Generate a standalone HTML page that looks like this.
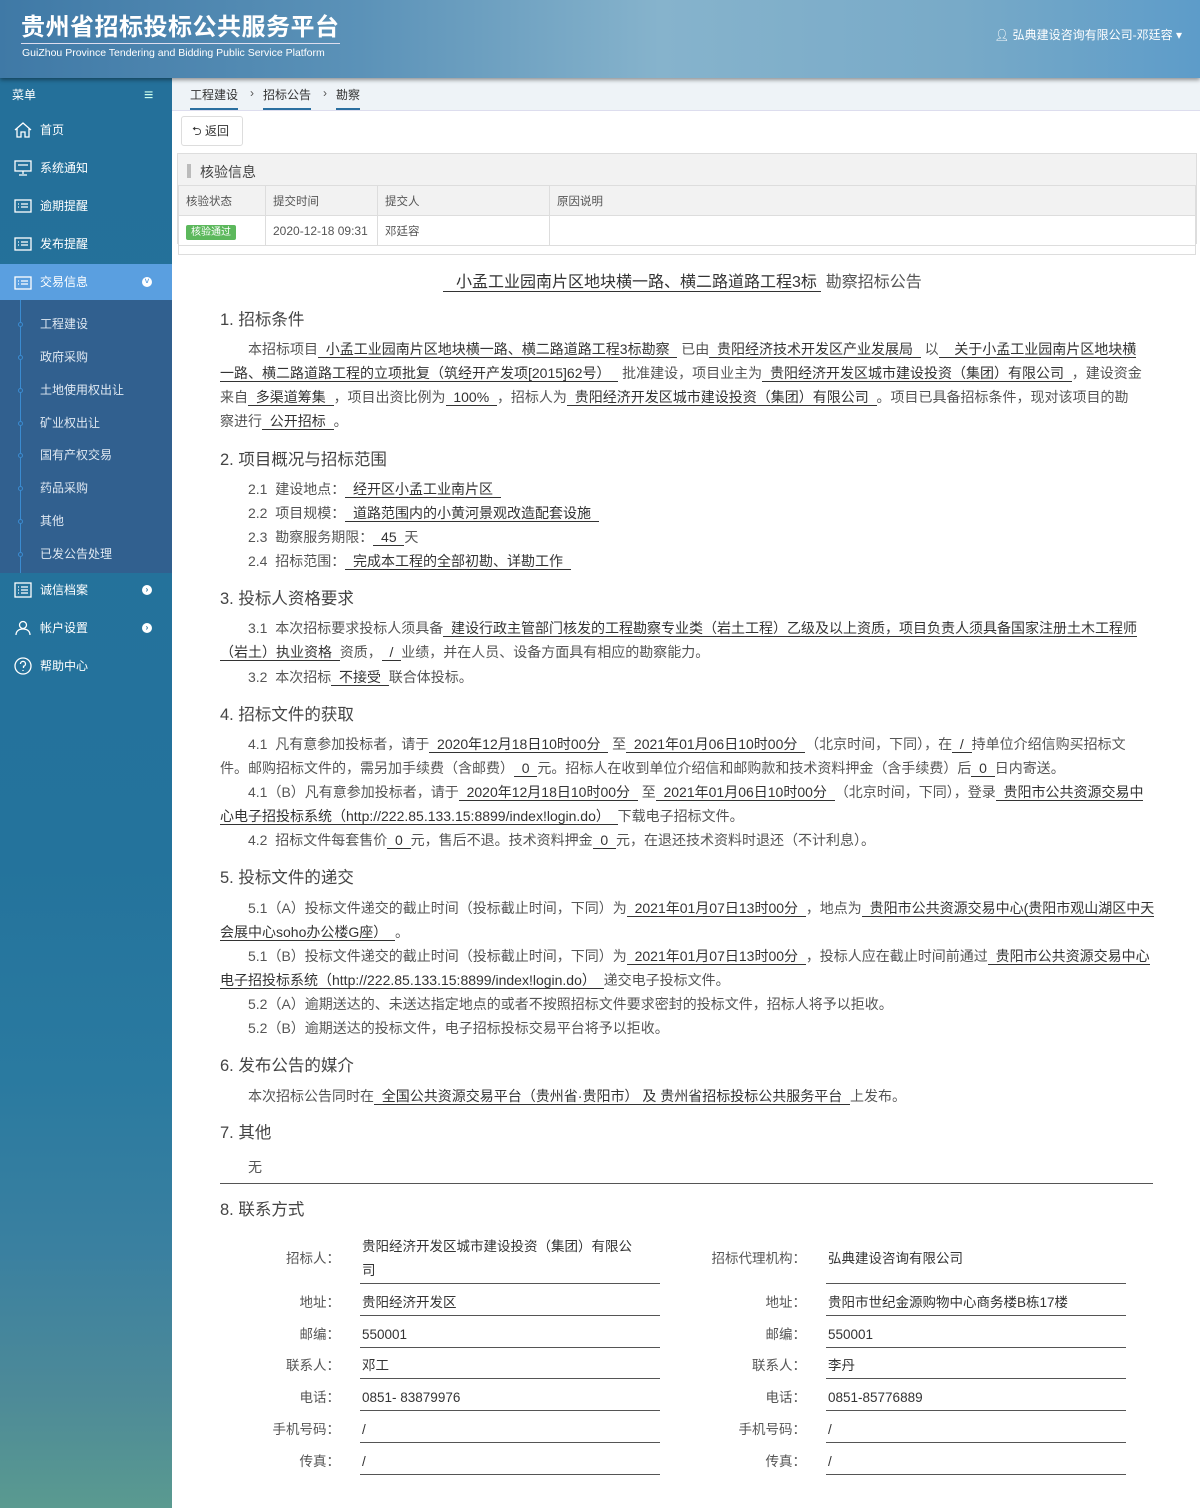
<!DOCTYPE html>
<html><head><meta charset="utf-8">
<style>
*{margin:0;padding:0;box-sizing:border-box}
body{width:1200px;height:1508px;position:relative;overflow:hidden;background:#fff;font-family:"Liberation Sans","Noto Sans CJK SC",sans-serif}
#hd{position:absolute;left:0;top:0;width:1200px;height:78px;background:linear-gradient(90deg,#3f79a6 0%,#5b92b8 30%,#86b3cc 55%,#78aac8 80%,#5d9cc9 100%);box-shadow:0 2px 4px rgba(0,0,0,.4);z-index:3}
#hd .t{position:absolute;left:21px;top:14px;color:#fff;font-size:24px;font-weight:bold;letter-spacing:0.5px;border-bottom:1px solid #dde;padding-bottom:1px;line-height:28px}
#hd .e{position:absolute;left:22px;top:47px;color:#fff;font-size:10.5px}
#hd .u{position:absolute;right:18px;top:26px;color:#fff;font-size:12px}
#sb{position:absolute;left:0;top:78px;width:172px;height:1430px;background:linear-gradient(180deg,#24709a 0%,#24739c 55%,#2a7aa0 70%,#3a80a0 82%,#4d8a98 92%,#5a9a90 100%)}
.mi{position:absolute;left:0;width:172px;height:38px;color:#fff;font-size:12px;line-height:38px;padding-left:40px}
.mi svg{position:absolute;left:14px;top:11px}
.mi .ar{position:absolute;left:142px;top:14px;width:10px;height:10px;border-radius:50%;background:#fff;color:#24709a;font-size:8px;line-height:10px;text-align:center;font-weight:bold}
.sub{position:absolute;left:0;top:300px;width:172px;height:273px;background:#31608f}
.sub .ln{position:absolute;left:20px;top:0;width:1px;height:273px;background:#3b8bd0}
.si{position:absolute;left:40px;color:#dfe8f2;font-size:12px}
.si:before{content:"";position:absolute;left:-22px;top:7px;width:3px;height:3px;border:1px solid #3b8bd0;border-radius:50%;background:#31608f}
#bc{position:absolute;left:172px;top:78px;width:1028px;height:33px;background:#eef3f7;border-bottom:1px solid #dde}
#bc span{position:absolute;top:8px;font-size:12px;color:#333;border-bottom:2px solid #2a6fa0;padding-bottom:5px}
#bc i{position:absolute;top:8px;font-style:normal;font-size:12px;color:#555}
.btn{position:absolute;left:181px;top:116px;width:62px;height:30px;border:1px solid #ddd;border-radius:3px;background:#fff;font-size:12px;line-height:28px;padding-left:10px;color:#333}
.pn{position:absolute;left:177px;top:153px;width:1020px;height:91px;border:1px solid #ddd;background:#f2f2f2}
.pn .h{position:absolute;left:22px;top:8px;font-size:14px;color:#444}
.pn .bar{position:absolute;left:9px;top:10px;width:4px;height:14px;background:#bbb}
.pn table{position:absolute;left:0;top:31px;width:1018px;border-collapse:collapse;font-size:11.5px;color:#555}
.pn td{border:1px solid #ddd;height:30px;padding-left:7px}
.pn tr.r td{background:#fff}
.tag{background:#5cb85c;color:#fff;font-size:10px;padding:2px 5px;border-radius:2px}
.doc{position:absolute;left:0;top:2px;width:1200px;height:1500px;font-family:"Liberation Sans","Noto Sans CJK SC",sans-serif;color:#555;font-size:14px}
.l{position:absolute;white-space:nowrap;height:24px;line-height:24px}
.l u{text-decoration:none;border-bottom:1px solid #333;color:#333}
.hh{position:absolute;left:220px;font-size:16.5px;color:#444;font-family:"Liberation Sans","Noto Sans CJK SC",sans-serif;line-height:24px}
.lab{position:absolute;text-align:right;font-size:13.5px;color:#555;line-height:24px}
.val{position:absolute;border-bottom:1px solid #555;font-size:13.5px;color:#333;line-height:24px;padding-left:2px}
</style></head><body>
<div id="hd">
<div class="t">贵州省招标投标公共服务平台</div>
<div class="e">GuiZhou Province Tendering and Bidding Public Service Platform</div>
<div class="u">&#128100;&#xFE0E; 弘典建设咨询有限公司-邓廷容 ▾</div>
</div>
<div id="sb">
<div class="mi" style="top:0;height:35px;line-height:35px;padding-left:12px;font-size:12px">菜单<span style="position:absolute;left:144px;top:0;font-size:16px;color:#cfe">≡</span></div>
<div class="mi" style="top:33px"><svg width="18" height="16" viewBox="0 0 18 16" fill="none" stroke="#fff" stroke-width="1.3"><path d="M1 8L9 1l8 7M3 6v9h4v-5h4v5h4V6"/></svg>首页</div>
<div class="mi" style="top:71px"><svg width="18" height="16" viewBox="0 0 18 16" fill="none" stroke="#fff" stroke-width="1.3"><rect x="1" y="1" width="16" height="10"/><path d="M9 11v3M5 15h8M4 5h10"/></svg>系统通知</div>
<div class="mi" style="top:109px"><svg width="18" height="16" viewBox="0 0 18 16" fill="none" stroke="#fff" stroke-width="1.3"><rect x="1" y="2" width="16" height="12"/><path d="M4 6h1M4 9h1M7 6h7M7 9h7"/></svg>逾期提醒</div>
<div class="mi" style="top:147px"><svg width="18" height="16" viewBox="0 0 18 16" fill="none" stroke="#fff" stroke-width="1.3"><rect x="1" y="2" width="16" height="12"/><path d="M4 6h1M4 9h1M7 6h7M7 9h7"/></svg>发布提醒</div>
<div class="mi" style="top:186px;height:36px;line-height:36px;background:#5a9fe0"><svg width="18" height="16" viewBox="0 0 18 16" fill="none" stroke="#fff" stroke-width="1.3"><rect x="1" y="2" width="16" height="12"/><path d="M4 6h1M4 9h1M7 6h7M7 9h7"/></svg>交易信息<span class="ar" style="top:13px;color:#5a9fe0">˅</span></div>
</div>
<div class="sub" style="top:300px"><div class="ln"></div>
<div class="si" style="top:15px">工程建设</div>
<div class="si" style="top:48px">政府采购</div>
<div class="si" style="top:81px">土地使用权出让</div>
<div class="si" style="top:114px">矿业权出让</div>
<div class="si" style="top:146px">国有产权交易</div>
<div class="si" style="top:179px">药品采购</div>
<div class="si" style="top:212px">其他</div>
<div class="si" style="top:245px">已发公告处理</div>
</div>
<div class="mi" style="top:571px"><svg width="18" height="16" viewBox="0 0 18 16" fill="none" stroke="#fff" stroke-width="1.3"><rect x="1" y="1" width="16" height="14"/><path d="M4 5h1M4 8h1M4 11h1M7 5h7M7 8h7M7 11h7"/></svg>诚信档案<span class="ar">›</span></div>
<div class="mi" style="top:609px"><svg width="18" height="16" viewBox="0 0 18 16" fill="none" stroke="#fff" stroke-width="1.3"><circle cx="9" cy="5" r="3.5"/><path d="M2 15c0-4 3-6 7-6s7 2 7 6"/></svg>帐户设置<span class="ar">›</span></div>
<div class="mi" style="top:647px"><svg width="18" height="18" viewBox="0 0 18 18" fill="none" stroke="#fff" stroke-width="1.3" style="top:10px"><circle cx="9" cy="9" r="8"/><path d="M6.5 7a2.5 2.5 0 1 1 3 2.3V11M9 13v1"/></svg>帮助中心</div>

<div id="bc"><span style="left:18px">工程建设</span><i style="left:78px">›</i><span style="left:91px">招标公告</span><i style="left:151px">›</i><span style="left:164px">勘察</span></div>
<div class="btn">⮌ 返回</div>
<div class="pn"><div class="bar"></div><div class="h">核验信息</div>
<table><tr><td style="width:87px">核验状态</td><td style="width:112px">提交时间</td><td style="width:172px">提交人</td><td>原因说明</td></tr>
<tr class="r"><td><span class="tag">核验通过</span></td><td style="font-size:12px">2020-12-18 09:31</td><td>邓廷容</td><td></td></tr>
<tr class="r"><td colspan="4" style="height:9px"></td></tr></table></div>

<div class="doc">
<div class="l" style="left:443px;top:269px;font-size:16px;color:#555"><u style="padding-left:13px">小孟工业园南片区地块横一路、横二路道路工程3标&nbsp;</u> 勘察招标公告</div>
<div class="hh" style="top:306px">1. 招标条件</div>
<div class="l" style="left:248px;top:335px">本招标项目<u>&nbsp;&nbsp;小孟工业园南片区地块横一路、横二路道路工程3标勘察&nbsp;&nbsp;</u> 已由<u>&nbsp;&nbsp;贵阳经济技术开发区产业发展局&nbsp;&nbsp;</u> 以<u>&nbsp;&nbsp;&nbsp;&nbsp;关于小孟工业园南片区地块横</u></div>
<div class="l" style="left:220px;top:359px"><u>一路、横二路道路工程的立项批复（筑经开产发项[2015]62号）&nbsp;&nbsp;</u> 批准建设，项目业主为<u>&nbsp;&nbsp;贵阳经济开发区城市建设投资（集团）有限公司&nbsp;&nbsp;</u>，建设资金</div>
<div class="l" style="left:220px;top:383px">来自<u>&nbsp;&nbsp;多渠道筹集&nbsp;&nbsp;</u>，项目出资比例为<u>&nbsp;&nbsp;100%&nbsp;&nbsp;</u>，招标人为<u>&nbsp;&nbsp;贵阳经济开发区城市建设投资（集团）有限公司&nbsp;&nbsp;</u>。项目已具备招标条件，现对该项目的勘</div>
<div class="l" style="left:220px;top:407px">察进行<u>&nbsp;&nbsp;公开招标&nbsp;&nbsp;</u>。</div>

<div class="hh" style="top:446px">2. 项目概况与招标范围</div>
<div class="l" style="left:248px;top:475px">2.1&nbsp; 建设地点：<u>&nbsp;&nbsp;经开区小孟工业南片区&nbsp;&nbsp;</u></div>
<div class="l" style="left:248px;top:499px">2.2&nbsp; 项目规模：<u>&nbsp;&nbsp;道路范围内的小黄河景观改造配套设施&nbsp;&nbsp;</u></div>
<div class="l" style="left:248px;top:523px">2.3&nbsp; 勘察服务期限：<u>&nbsp;&nbsp;45&nbsp;&nbsp;</u>天</div>
<div class="l" style="left:248px;top:547px">2.4&nbsp; 招标范围：<u>&nbsp;&nbsp;完成本工程的全部初勘、详勘工作&nbsp;&nbsp;</u></div>

<div class="hh" style="top:585px">3. 投标人资格要求</div>
<div class="l" style="left:248px;top:614px">3.1&nbsp; 本次招标要求投标人须具备<u>&nbsp;&nbsp;建设行政主管部门核发的工程勘察专业类（岩土工程）乙级及以上资质，项目负责人须具备国家注册土木工程师</u></div>
<div class="l" style="left:220px;top:638px"><u>（岩土）执业资格&nbsp;&nbsp;</u>资质，<u>&nbsp;&nbsp;/&nbsp;&nbsp;</u>业绩，并在人员、设备方面具有相应的勘察能力。</div>
<div class="l" style="left:248px;top:663px">3.2&nbsp; 本次招标<u>&nbsp;&nbsp;不接受&nbsp;&nbsp;</u>联合体投标。</div>

<div class="hh" style="top:701px">4. 招标文件的获取</div>
<div class="l" style="left:248px;top:730px">4.1&nbsp; 凡有意参加投标者，请于<u>&nbsp;&nbsp;2020年12月18日10时00分&nbsp;&nbsp;</u> 至<u>&nbsp;&nbsp;2021年01月06日10时00分&nbsp;&nbsp;</u>（北京时间，下同），在<u>&nbsp;&nbsp;/&nbsp;&nbsp;</u>持单位介绍信购买招标文</div>
<div class="l" style="left:220px;top:754px">件。邮购招标文件的，需另加手续费（含邮费）<u>&nbsp;&nbsp;0&nbsp;&nbsp;</u>元。招标人在收到单位介绍信和邮购款和技术资料押金（含手续费）后<u>&nbsp;&nbsp;0&nbsp;&nbsp;</u>日内寄送。</div>
<div class="l" style="left:248px;top:778px">4.1（B）凡有意参加投标者，请于<u>&nbsp;&nbsp;2020年12月18日10时00分&nbsp;&nbsp;</u> 至<u>&nbsp;&nbsp;2021年01月06日10时00分&nbsp;&nbsp;</u>（北京时间，下同），登录<u>&nbsp;&nbsp;贵阳市公共资源交易中</u></div>
<div class="l" style="left:220px;top:802px"><u>心电子招投标系统（http://222.85.133.15:8899/index!login.do）&nbsp;&nbsp;</u>下载电子招标文件。</div>
<div class="l" style="left:248px;top:826px">4.2&nbsp; 招标文件每套售价<u>&nbsp;&nbsp;0&nbsp;&nbsp;</u>元，售后不退。技术资料押金<u>&nbsp;&nbsp;0&nbsp;&nbsp;</u>元，在退还技术资料时退还（不计利息）。</div>

<div class="hh" style="top:864px">5. 投标文件的递交</div>
<div class="l" style="left:248px;top:894px">5.1（A）投标文件递交的截止时间（投标截止时间，下同）为<u>&nbsp;&nbsp;2021年01月07日13时00分&nbsp;&nbsp;</u>，地点为<u>&nbsp;&nbsp;贵阳市公共资源交易中心(贵阳市观山湖区中天</u></div>
<div class="l" style="left:220px;top:918px"><u>会展中心soho办公楼G座）&nbsp;&nbsp;</u>。</div>
<div class="l" style="left:248px;top:942px">5.1（B）投标文件递交的截止时间（投标截止时间，下同）为<u>&nbsp;&nbsp;2021年01月07日13时00分&nbsp;&nbsp;</u>，投标人应在截止时间前通过<u>&nbsp;&nbsp;贵阳市公共资源交易中心</u></div>
<div class="l" style="left:220px;top:966px"><u>电子招投标系统（http://222.85.133.15:8899/index!login.do）&nbsp;&nbsp;</u>递交电子投标文件。</div>
<div class="l" style="left:248px;top:990px">5.2（A）逾期送达的、未送达指定地点的或者不按照招标文件要求密封的投标文件，招标人将予以拒收。</div>
<div class="l" style="left:248px;top:1014px">5.2（B）逾期送达的投标文件，电子招标投标交易平台将予以拒收。</div>

<div class="hh" style="top:1052px">6. 发布公告的媒介</div>
<div class="l" style="left:248px;top:1082px">本次招标公告同时在<u>&nbsp;&nbsp;全国公共资源交易平台（贵州省·贵阳市）&nbsp;及&nbsp;贵州省招标投标公共服务平台&nbsp;&nbsp;</u>上发布。</div>

<div class="hh" style="top:1119px">7. 其他</div>
<div class="l" style="left:248px;top:1153px">无</div>
<div style="position:absolute;left:220px;top:1181px;width:933px;height:1px;background:#555"></div>

<div class="hh" style="top:1196px">8. 联系方式</div>

<div class="lab" style="left:240px;width:100px;top:1245px">招标人：</div>
<div class="val" style="left:360px;width:300px;top:1233px;height:49px">贵阳经济开发区城市建设投资（集团）有限公<br>司</div>
<div class="lab" style="left:680px;width:126px;top:1245px">招标代理机构：</div>
<div class="val" style="left:826px;width:300px;top:1233px;height:49px;line-height:48px">弘典建设咨询有限公司</div>

<div class="lab" style="left:240px;width:100px;top:1289px">地址：</div><div class="val" style="left:360px;width:300px;top:1289px">贵阳经济开发区</div>
<div class="lab" style="left:680px;width:126px;top:1289px">地址：</div><div class="val" style="left:826px;width:300px;top:1289px">贵阳市世纪金源购物中心商务楼B栋17楼</div>
<div class="lab" style="left:240px;width:100px;top:1321px">邮编：</div><div class="val" style="left:360px;width:300px;top:1321px">550001</div>
<div class="lab" style="left:680px;width:126px;top:1321px">邮编：</div><div class="val" style="left:826px;width:300px;top:1321px">550001</div>
<div class="lab" style="left:240px;width:100px;top:1352px">联系人：</div><div class="val" style="left:360px;width:300px;top:1352px">邓工</div>
<div class="lab" style="left:680px;width:126px;top:1352px">联系人：</div><div class="val" style="left:826px;width:300px;top:1352px">李丹</div>
<div class="lab" style="left:240px;width:100px;top:1384px">电话：</div><div class="val" style="left:360px;width:300px;top:1384px">0851- 83879976</div>
<div class="lab" style="left:680px;width:126px;top:1384px">电话：</div><div class="val" style="left:826px;width:300px;top:1384px">0851-85776889</div>
<div class="lab" style="left:240px;width:100px;top:1416px">手机号码：</div><div class="val" style="left:360px;width:300px;top:1416px">/</div>
<div class="lab" style="left:680px;width:126px;top:1416px">手机号码：</div><div class="val" style="left:826px;width:300px;top:1416px">/</div>
<div class="lab" style="left:240px;width:100px;top:1448px">传真：</div><div class="val" style="left:360px;width:300px;top:1448px">/</div>
<div class="lab" style="left:680px;width:126px;top:1448px">传真：</div><div class="val" style="left:826px;width:300px;top:1448px">/</div>
</div>
</body></html>
